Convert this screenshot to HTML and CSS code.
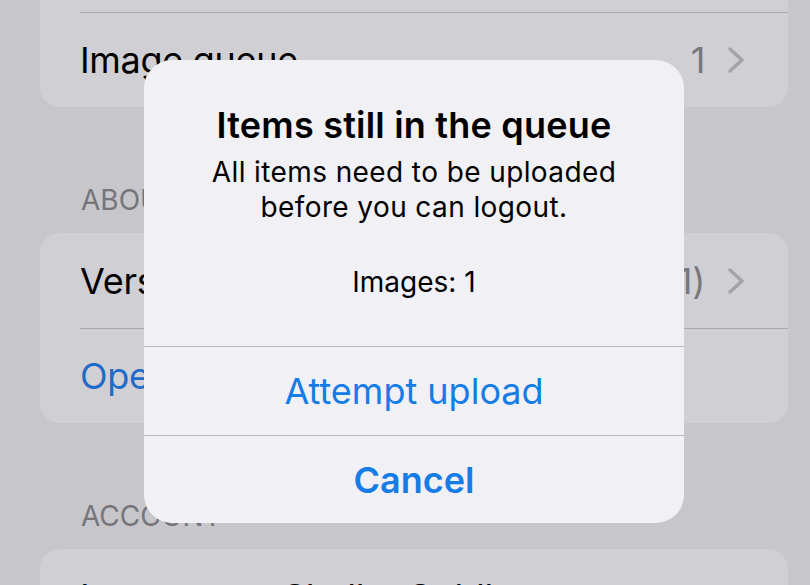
FILE: index.html
```html
<!DOCTYPE html>
<html lang="en">
<head>
<meta charset="utf-8">
<title>Settings</title>
<link rel="stylesheet" href="styles.css">
</head>
<body>
<div class="screen">
  <div class="list">
    <div class="card">
      <div class="row">
        <span class="label">Upload settings</span>
        <span class="value"></span>
        <svg class="chev" viewBox="0 0 18 26"><polyline points="3,2 15,13 3,24"/></svg>
      </div>
      <div class="row">
        <span class="label">Image queue</span>
        <span class="value">1</span>
        <svg class="chev" viewBox="0 0 18 26"><polyline points="3,2 15,13 3,24"/></svg>
      </div>
    </div>

    <div class="section-header">ABOUT</div>
    <div class="card">
      <div class="row">
        <span class="label">Version</span>
        <span class="value">2.4.0 (1)</span>
        <svg class="chev" viewBox="0 0 18 26"><polyline points="3,2 15,13 3,24"/></svg>
      </div>
      <div class="row">
        <span class="label link">Open source licenses</span>
      </div>
    </div>

    <div class="section-header">ACCOUNT</div>
    <div class="card">
      <div class="row">
        <span class="label account">Logout</span>
        <span class="label name">Shelby Goldberg</span>
      </div>
    </div>
  </div>

  <div class="alert" role="alertdialog">
    <div class="alert-body">
      <div class="alert-title">Items still in the queue</div>
      <div class="alert-message">All items need to be uploaded<br>before you can logout.</div>
      <div class="alert-detail">Images: 1</div>
    </div>
    <div class="alert-btn">Attempt upload</div>
    <div class="alert-btn strong">Cancel</div>
  </div>
</div>
</body>
</html>
```
FILE: styles.css
```css
html, body {
  margin: 0;
  padding: 0;
}
body {
  width: 810px;
  height: 585px;
  overflow: hidden;
  background: #c6c6cb;
  font-family: "Inter", "Noto Sans", sans-serif;
  color: #000;
}
.screen {
  position: relative;
  display: flow-root;
  width: 810px;
  height: 585px;
  overflow: hidden;
}
.list {
  margin-top: -83px;
  padding: 0 22px 0 40px;
}
.card {
  background: #d0cfd4;
  border-radius: 20px;
  overflow: hidden;
}
.row {
  height: 95px;
  margin-left: 40px;
  padding-right: 43px;
  display: flex;
  align-items: center;
  font-size: 36px;
  letter-spacing: -0.3px;
  box-sizing: border-box;
}
.row + .row {
  border-top: 1px solid #a9a9ad;
}
.label {
  flex: none;
}
.label.link {
  color: #1f6cc8;
}
.label.name {
  margin-left: 86px;
}
.value {
  margin-left: auto;
  color: #77777c;
}
.chev {
  width: 18px;
  height: 26px;
  margin-left: 22px;
  flex: none;
}
.chev polyline {
  fill: none;
  stroke: #a3a3a8;
  stroke-width: 3.4;
  stroke-linecap: round;
  stroke-linejoin: round;
}
.section-header {
  height: 126px;
  box-sizing: border-box;
  display: flex;
  align-items: flex-end;
  padding: 0 0 19px 41px;
  font-size: 28px;
  line-height: 28px;
  color: #75757a;
}

.alert {
  position: absolute;
  left: 144px;
  top: 60px;
  width: 540px;
  height: 463px;
  border-radius: 28px;
  background: #f1f0f4;
  overflow: hidden;
  display: flex;
  flex-direction: column;
  text-align: center;
}
.alert-body {
  height: 286px;
  box-sizing: border-box;
  padding-top: 43px;
}
.alert-title {
  font-size: 36px;
  line-height: 44px;
  font-weight: 600;
  letter-spacing: 0.2px;
}
.alert-message {
  margin-top: 8px;
  font-size: 28px;
  line-height: 35px;
  letter-spacing: 0.4px;
}
.alert-detail {
  margin-top: 40px;
  font-size: 28px;
  line-height: 35px;
}
.alert-btn {
  height: 88px;
  border-top: 1px solid #b9b9be;
  display: flex;
  align-items: center;
  justify-content: center;
  font-size: 36px;
  color: #167ce6;
}
.alert-btn.strong {
  font-weight: 600;
  flex: 1;
}
```
